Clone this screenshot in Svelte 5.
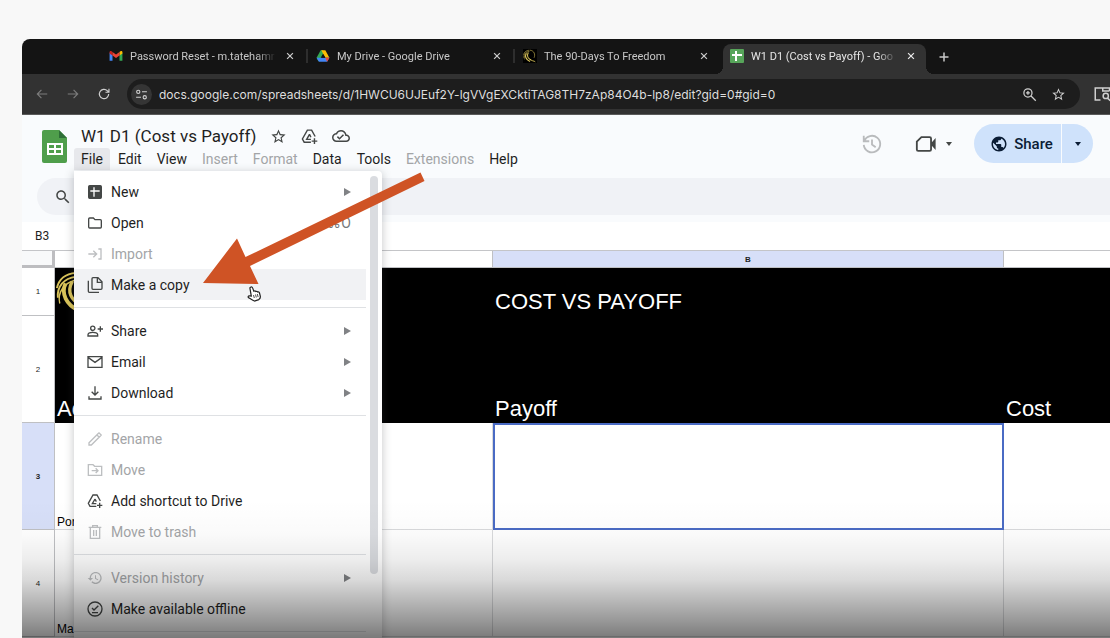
<script>
	// 24x24 icons; "line" icons are stroked, the others filled
	const icons = {
		back: { line: true, d: 'M21 12H4M11 5l-7 7 7 7' },
		forward: { line: true, d: 'M3 12h17M13 5l7 7-7 7' },
		reload: { line: true, d: 'M20 12a8 8 0 1 1-2.4-5.7L20 8.500M20.500 3v6h-6' },
		tune: { line: true, d: 'M3 7a3 3 0 1 0 6 0a3 3 0 1 0-6 0M13 7h9M2 17h9M15 17a3 3 0 1 0 6 0a3 3 0 1 0-6 0' },
		close: { line: true, d: 'M5 5l14 14M19 5L5 19' },
		plus: { line: true, d: 'M12 3v18M3 12h18' },
		zoom: { line: true, d: 'M3 9.500a6.500 6.500 0 1 0 13 0a6.500 6.500 0 1 0-13 0M14.500 14.500L22 22M9.500 6.500v6M6.500 9.500h6' },
		tabSearch: { line: true, d: 'M10 20H3V4h19v4M13 4v4h9M13.500 14.500a3.500 3.500 0 1 0 7 0a3.500 3.500 0 1 0-7 0M19.500 17.500L23 21' },
		star: { d: 'M22 9.240l-7.190-.620L12 2 9.190 8.630 2 9.240l5.460 4.730L5.820 21 12 17.270 18.180 21l-1.630-7.030L22 9.240zM12 15.400l-3.760 2.270 1-4.280-3.320-2.880 4.380-.380L12 6.100l1.710 4.040 4.380.380-3.320 2.880 1 4.280L12 15.400z' },
		cloud: { d: 'M19.350 10.040C18.670 6.590 15.640 4 12 4 9.110 4 6.600 5.640 5.350 8.040 2.340 8.360 0 10.910 0 14c0 3.310 2.690 6 6 6h13c2.760 0 5-2.240 5-5 0-2.640-2.050-4.780-4.650-4.960zM19 18H6c-2.210 0-4-1.790-4-4 0-2.050 1.530-3.760 3.560-3.970l1.070-.110.500-.950C8.080 7.140 9.940 6 12 6c2.620 0 4.880 1.860 5.390 4.430l.300 1.500 1.530.110c1.560.100 2.780 1.410 2.780 2.960 0 1.650-1.350 3-3 3zm-9-3.820l-2.090-2.090L6.500 13.500 10 17l6.010-6.010-1.410-1.410z' },
		search: { d: 'M15.500 14h-.790l-.280-.270C15.410 12.590 16 11.110 16 9.500 16 5.910 13.090 3 9.500 3S3 5.910 3 9.500 5.910 16 9.500 16c1.610 0 3.090-.590 4.230-1.570l.270.280v.790l5 4.990L20.490 19l-4.990-5zm-6 0C7.010 14 5 11.990 5 9.500S7.010 5 9.500 5 14 7.010 14 9.500 11.990 14 9.500 14z' },
		recent: { line: true, d: 'M3 3v6h6M3.500 9a9 9 0 1 1-.500 4M12 7v5.500l4 3' },
		video: { line: true, d: 'M7 4.500h9a1.500 1.500 0 0 1 1.500 1.500v12A1.500 1.500 0 0 1 16 19.500H3.500A1.500 1.500 0 0 1 2 18V9.500zM18 12l3.500-4v8zM19 12l2-2v4z' },
		globe: { d: 'M12 2C6.480 2 2 6.480 2 12s4.480 10 10 10 10-4.480 10-10S17.520 2 12 2zm-1 17.930c-3.950-.490-7-3.850-7-7.930 0-.620.080-1.210.210-1.790L9 15v1c0 1.100.900 2 2 2v1.930zm6.900-2.540c-.260-.810-1-1.390-1.900-1.390h-1v-3c0-.550-.450-1-1-1H8v-2h2c.550 0 1-.450 1-1V7h2c1.100 0 2-.900 2-2v-.410c2.930 1.190 5 4.060 5 7.410 0 2.080-.800 3.970-2.100 5.390z' },
		newSheet: { d: 'M4 1.500h16A2.500 2.500 0 0 1 22.500 4v16a2.500 2.500 0 0 1-2.500 2.500H4A2.500 2.500 0 0 1 1.500 20V4A2.500 2.500 0 0 1 4 1.500zM9.500 5v4.500H5v2h4.500V19h2v-7.500H19v-2h-7.500V5z' },
		folder: { line: true, d: 'M4 4.500h5.500l2.500 2.500h8a1.500 1.500 0 0 1 1.500 1.500V18a1.500 1.500 0 0 1-1.500 1.500H4A1.500 1.500 0 0 1 2.500 18V6A1.500 1.500 0 0 1 4 4.500z' },
		importFile: { line: true, d: 'M2 12h12M9.500 7l5 5-5 5M17 4.500h4v15h-4' },
		copy: { line: true, d: 'M9 1h7.500l6 6v10a1.500 1.500 0 0 1-1.500 1.500H9A1.500 1.500 0 0 1 7.500 17V2.500A1.500 1.500 0 0 1 9 1zM15.500 1.500V8H22M2 5.500V21.500a1.500 1.500 0 0 0 1.500 1.500H18' },
		person: { line: true, d: 'M5.500 8a3.200 3.200 0 1 0 6.400 0a3.200 3.200 0 1 0-6.400 0M1.500 19.500v-2c0-2 3.500-3.500 7.200-3.500s7.300 1.500 7.300 3.500v2zM20 5v8M16 9h8' },
		mail: { line: true, d: 'M1.500 4h21v16h-21zM2 5.500l10 7 10-7' },
		download: { line: true, d: 'M12 2v13M7 10l5 5 5-5M3 17v4h18v-4' },
		pencil: { line: true, d: 'M3 21v-3.500L16.500 4l1.500-1.300L21.300 6 20 7.500 6.500 21zM15 6l3 3' },
		move: { line: true, d: 'M2 4h7l2.500 2.500H22V20H2zM7 13h9M13 9.500l3.500 3.500-3.500 3.500' },
		shortcut: { line: true, d: 'M14 20H4.500l-2.500-4.500L9 3h6l5 9M12 9l-4 7h6M12 9l2 4M19 14.500v8M15 18.500h8' },
		trash: { line: true, d: 'M2.500 5h19M8.500 4.500V2.500h7v2M5 5.500v16h14v-16M10 9v9M14 9v9' },
		history: { d: 'M13 3c-4.970 0-9 4.030-9 9H1l3.890 3.890.070.140L9 12H6c0-3.870 3.130-7 7-7s7 3.130 7 7-3.130 7-7 7c-1.930 0-3.680-.790-4.940-2.060l-1.420 1.420C8.270 19.990 10.510 21 13 21c4.970 0 9-4.030 9-9s-4.030-9-9-9zm-1 5v5l4.280 2.540.720-1.210-3.500-2.080V8H12z' },
		offline: { line: true, d: 'M1.500 12a10.500 10.500 0 1 0 21 0a10.500 10.500 0 1 0-21 0M7.500 10.500l3 3L17 7M7.500 17.500h9' }
	};

	const tabs = [
		{ title: 'Password Reset - m.tatehamr', logo: 'gmail' },
		{ title: 'My Drive - Google Drive', logo: 'drive' },
		{ title: 'The 90-Days To Freedom', logo: 'swirl' },
		{ title: 'W1 D1 (Cost vs Payoff) - Goo', logo: 'sheets', active: true }
	];

	const menus = [
		{ label: 'File', open: true },
		{ label: 'Edit' },
		{ label: 'View' },
		{ label: 'Insert', disabled: true },
		{ label: 'Format', disabled: true },
		{ label: 'Data' },
		{ label: 'Tools' },
		{ label: 'Extensions', disabled: true },
		{ label: 'Help' }
	];

	const fileMenu = [
		[
			{ label: 'New', icon: 'newSheet', sub: true },
			{ label: 'Open', icon: 'folder', keys: '⌘O' },
			{ label: 'Import', icon: 'importFile', disabled: true },
			{ label: 'Make a copy', icon: 'copy', hover: true }
		],
		[
			{ label: 'Share', icon: 'person', sub: true },
			{ label: 'Email', icon: 'mail', sub: true },
			{ label: 'Download', icon: 'download', sub: true }
		],
		[
			{ label: 'Rename', icon: 'pencil', disabled: true },
			{ label: 'Move', icon: 'move', disabled: true },
			{ label: 'Add shortcut to Drive', icon: 'shortcut' },
			{ label: 'Move to trash', icon: 'trash', disabled: true }
		],
		[
			{ label: 'Version history', icon: 'history', disabled: true, sub: true },
			{ label: 'Make available offline', icon: 'offline' }
		]
	];

	let url = 'docs.google.com/spreadsheets/d/1HWCU6UJEuf2Y-lgVVgEXCktiTAG8TH7zAp84O4b-lp8/edit?gid=0#gid=0';
	let cellName = 'B3';
</script>

{#snippet icon(name, size)}
	<svg class="icon" class:line={icons[name].line} width={size} height={size} viewBox="0 0 24 24" aria-hidden="true">
		<path d={icons[name].d} fill-rule="evenodd" />
	</svg>
{/snippet}

{#snippet swirl()}
	<g fill="none" stroke="#d9c35a">
		<path d="M2 20C4 10 11 5 22 4" stroke-width="2" />
		<path d="M3 30C2 18 9 10 22 8" stroke-width="2" />
		<path d="M5 36C2 24 10 15 20 12" stroke-width="1.500" />
		<path d="M11 15C6 26 12 37 24 43" stroke-width="4" />
		<path d="M18 13C12 24 17 33 28 38" stroke-width="3.500" />
		<path d="M24 4C38 6 43 18 38 30" stroke-width="2" />
		<path d="M22 34C30 42 38 40 42 44" stroke-width="3" />
	</g>
{/snippet}

{#snippet logo(name)}
	{#if name === 'gmail'}
		<svg width="14" height="14" viewBox="0 0 24 24" aria-hidden="true">
			<path d="M1 20V6l5 4v10z" fill="#4285f4" />
			<path d="M23 20V6l-5 4v10z" fill="#34a853" />
			<path d="M1 6c0-3 3-3 5-1v6L1 7.500z" fill="#c5221f" />
			<path d="M23 6c0-3-3-3-5-1v6l5-3.500z" fill="#fbbc04" />
			<path d="M6 5l6 4.500L18 5v6l-6 4.500L6 11z" fill="#ea4335" />
		</svg>
	{:else if name === 'drive'}
		<svg width="14" height="14" viewBox="0 0 24 24" aria-hidden="true">
			<path d="M8 2h4l2 5-7 13-3 1-3-6z" fill="#34a853" />
			<path d="M9 2h7l7 13h-7z" fill="#fbbc04" />
			<path d="M7 15h16l-4 7H5l-4-7z" fill="#4285f4" />
			<path d="M16 15h7l-4 7z" fill="#ea4335" />
			<path d="M12 8l4 7H8z" fill="#141414" />
		</svg>
	{:else if name === 'swirl'}
		<svg width="14" height="14" viewBox="0 0 48 48" aria-hidden="true">
			<rect width="48" height="48" fill="#000" />
			{@render swirl()}
		</svg>
	{:else}
		<svg width="14" height="14" viewBox="0 0 14 14" aria-hidden="true">
			<rect width="14" height="14" rx="1" fill="#57a55a" />
			<path d="M6 2v10M2 6h10" stroke="#fff" stroke-width="2" />
		</svg>
	{/if}
{/snippet}

<div class="page">
	<div class="browser">
		<div class="tab-strip">
			{#each tabs as tab}
				<div class="tab" class:active={tab.active}>
					{@render logo(tab.logo)}
					<span class="tab-title">{tab.title}</span>
					<button aria-label="Close tab">{@render icon('close', 10)}</button>
				</div>
			{/each}
			<button class="new-tab" aria-label="New tab">{@render icon('plus', 12)}</button>
		</div>

		<div class="nav">
			<button class="nav-btn dim" aria-label="Back">{@render icon('back', 14)}</button>
			<button class="nav-btn dim" aria-label="Forward">{@render icon('forward', 14)}</button>
			<button class="nav-btn" aria-label="Reload">{@render icon('reload', 14)}</button>
			<div class="omnibox">
				<button class="site-info" aria-label="Site information">{@render icon('tune', 13)}</button>
				<input type="text" aria-label="Address" spellcheck="false" bind:value={url} />
				<button aria-label="Zoom">{@render icon('zoom', 15)}</button>
				<button aria-label="Bookmark">{@render icon('star', 15)}</button>
			</div>
			<button class="tab-search" aria-label="Search tabs">{@render icon('tabSearch', 18)}</button>
		</div>

		<header class="doc-header">
			<svg class="sheets-logo" width="25" height="33" viewBox="0 0 25 33" aria-hidden="true">
				<path d="M2 0h15l8 8v23a2 2 0 0 1-2 2H2a2 2 0 0 1-2-2V2a2 2 0 0 1 2-2z" fill="#4f9e4b" />
				<path d="M17 0l8 8h-8z" fill="#2e6f37" />
				<path d="M5 13h16v12H5zM7 15v3h5v-3zm7 0v3h5v-3zM7 20v3h5v-3zm7 0v3h5v-3z" fill="#fff" fill-rule="evenodd" />
			</svg>
			<div class="doc-main">
				<div class="title-row">
					<h1>W1 D1 (Cost vs Payoff)</h1>
					<button aria-label="Star">{@render icon('star', 17)}</button>
					<button aria-label="Add shortcut to Drive">{@render icon('shortcut', 17)}</button>
					<button aria-label="Document status">{@render icon('cloud', 18)}</button>
				</div>
				<nav class="menubar">
					{#each menus as menu}
						<button class:open={menu.open} disabled={menu.disabled}>{menu.label}</button>
					{/each}

					<div class="dropdown">
						<div class="dropdown-list" role="menu">
							{#each fileMenu as group}
								{#each group as item}
									<button class="item" class:hover={item.hover} role="menuitem" disabled={item.disabled}>
										{@render icon(item.icon, 16)}
										<span class="label">{item.label}</span>
										{#if item.keys}<span class="keys">{item.keys}</span>{/if}
										{#if item.sub}<span class="sub"></span>{/if}
									</button>
								{/each}
								<hr />
							{/each}
						</div>
						<div class="scrollbar"></div>
					</div>
				</nav>
			</div>
			<div class="doc-actions">
				<button class="recent" aria-label="Version history">{@render icon('recent', 22)}</button>
				<button class="meet" aria-label="Join a call">{@render icon('video', 22)}<span class="caret"></span></button>
				<div class="share">
					<button class="share-main">{@render icon('globe', 18)}Share</button>
					<button class="share-more" aria-label="Share options"><span class="caret"></span></button>
				</div>
			</div>
		</header>

		<div class="toolbar-row">
			<div class="toolbar">
				<button aria-label="Search the menus">{@render icon('search', 18)}</button>
			</div>
		</div>

		<div class="formula-bar">
			<input type="text" aria-label="Name box" bind:value={cellName} />
		</div>

		<table>
			<colgroup>
				<col class="c-head" />
				<col class="c-a" />
				<col class="c-b" />
				<col />
			</colgroup>
			<thead>
				<tr>
					<th class="corner"></th>
					<th></th>
					<th class="current">B</th>
					<th></th>
				</tr>
			</thead>
			<tbody>
				<tr class="banner short">
					<th>1</th>
					<td class="logo-cell">
						<svg width="46" height="46" viewBox="0 0 48 48" aria-hidden="true">{@render swirl()}</svg>
					</td>
					<td>COST VS PAYOFF</td>
					<td></td>
				</tr>
				<tr class="banner">
					<th>2</th>
					<td>Ac</td>
					<td>Payoff</td>
					<td>Cost</td>
				</tr>
				<tr>
					<th class="current">3</th>
					<td>Por</td>
					<td class="selected"></td>
					<td></td>
				</tr>
				<tr>
					<th>4</th>
					<td>Ma</td>
					<td></td>
					<td></td>
				</tr>
			</tbody>
		</table>
		<div class="fade"></div>
	</div>

	<svg class="pointer" width="14" height="16" viewBox="0 0 14 16" aria-hidden="true">
		<path
			d="M3.500 1.200c.9-.6 1.800-.2 2.100.7l1.200 3.300c.8-.5 1.600-.3 2 .3.800-.4 1.500-.1 1.800.5.900-.3 1.600.1 1.900 1l.8 3.200c.3 1.600-.4 2.600-1.500 3.400l-4.300 1.400c-1.800-.6-3.300-2-5.600-3.100-1.300-.7-.9-2.200.6-2.100l1.800.3L3 2.600c-.2-.6 0-1.100.5-1.400z"
			fill="#fff"
			stroke="#222"
			stroke-width="1.200"
		/>
		<path d="M6.500 9l.8 3M8.500 8.500l.8 3M10.300 8l.8 3" stroke="#222" stroke-width=".8" />
	</svg>

	<svg class="arrow" width="224" height="114" viewBox="0 0 224 114" aria-hidden="true">
		<path d="M1 112L35 67.500 43.500 86 218.500 1.500 222.500 10 48 95 56.500 113z" fill="#cf5325" />
	</svg>
</div>

<style>
	:global(body) {
		margin: 0;
		background: #f8f8f8;
	}

	.page {
		position: relative;
		box-sizing: border-box;
		height: 100vh;
		padding: 39px 0 0 22px;
		overflow: hidden;
		font-family: Roboto, 'Liberation Sans', sans-serif;
		color: #1f1f1f;
	}

	.browser {
		position: relative;
		height: 100%;
		border-top-left-radius: 8px;
		overflow: hidden;
		background: #fff;
	}

	button {
		display: flex;
		align-items: center;
		justify-content: center;
		padding: 0;
		border: none;
		background: none;
		color: inherit;
		font: inherit;
	}

	.icon {
		flex: none;
		fill: currentColor;
	}

	.icon.line {
		fill: none;
		stroke: currentColor;
		stroke-width: 2;
	}

	/* Browser chrome */
	.tab-strip {
		display: flex;
		gap: 4px;
		height: 35px;
		padding-left: 80px;
		background: #141414;
		color: #c8c8c8;
		font: 11px Roboto, sans-serif;
	}

	.tab {
		position: relative;
		display: flex;
		align-items: center;
		box-sizing: border-box;
		width: 203px;
		padding: 0 9px 1px 7px;
	}

	.tab svg {
		flex: none;
	}

	.tab:nth-child(-n + 2)::after {
		content: '';
		position: absolute;
		right: -3px;
		width: 2px;
		height: 14px;
		background: #2e2e2e;
	}

	.tab.active {
		height: 30px;
		margin-top: 5px;
		padding-bottom: 6px;
		border-radius: 8px 8px 0 0;
		background: #323232;
		color: #e6e6e6;
	}

	.tab.active::before,
	.tab.active::after {
		content: '';
		position: absolute;
		bottom: 0;
		width: 8px;
		height: 8px;
	}

	.tab.active::before {
		left: -8px;
		background: radial-gradient(circle at 0 0, #141414 8px, #323232 8px);
	}

	.tab.active::after {
		right: -8px;
		background: radial-gradient(circle at 100% 0, #141414 8px, #323232 8px);
	}

	.tab-title {
		flex: 1;
		margin: 0 8px 0 7px;
		overflow: hidden;
		white-space: nowrap;
		mask-image: linear-gradient(to left, transparent, #000 20px);
	}

	.tab button {
		width: 12px;
	}

	.tab button .icon,
	.new-tab .icon {
		stroke-width: 3;
	}

	.new-tab {
		width: 27px;
	}

	.nav {
		display: flex;
		align-items: center;
		box-sizing: border-box;
		height: 41px;
		padding-left: 4px;
		border-bottom: 1px solid #5a5a5a;
		background: #323232;
		color: #d0d0d0;
	}

	.nav-btn {
		width: 31px;
	}

	.dim {
		color: #7c7c7c;
	}

	.omnibox {
		flex: 1;
		display: flex;
		align-items: center;
		gap: 14px;
		height: 30px;
		margin: 0 13px 0 8px;
		padding: 0 14px 0 4px;
		border-radius: 15px;
		background: #1d1d1d;
	}

	.omnibox input {
		flex: 1;
		min-width: 0;
		margin-left: -7px;
		padding: 0;
		border: none;
		outline: none;
		background: none;
		color: #dedede;
		font: 12px Inter, sans-serif;
	}

	.site-info {
		width: 21px;
		height: 21px;
		border-radius: 50%;
		background: #353535;
	}

	.tab-search {
		justify-content: flex-start;
		width: 17px;
	}

	/* Document header */
	.doc-header {
		display: flex;
		box-sizing: border-box;
		height: 63px;
		padding: 9px 17px 0 20px;
		background: #f9fbfd;
	}

	.sheets-logo {
		flex: none;
		margin: 6px 7px 0 0;
	}

	.doc-main {
		flex: 1;
	}

	.title-row {
		display: flex;
		align-items: center;
		gap: 14px;
		height: 24px;
		padding-left: 7px;
		color: #444746;
	}

	h1 {
		margin: 0;
		color: #1f1f1f;
		font-size: 17px;
		font-weight: 400;
		line-height: 24px;
		white-space: nowrap;
	}

	.menubar {
		position: relative;
		display: flex;
		gap: 1px;
		font-size: 14px;
	}

	.menubar > button {
		height: 22px;
		padding: 0 7px;
		border-radius: 3px 3px 0 0;
	}

	.menubar > button.open {
		background: #e7e8ec;
	}

	.menubar > button:disabled {
		color: #a3a5a7;
	}

	.dropdown {
		position: absolute;
		top: 23px;
		left: 0;
		z-index: 5;
		display: flex;
		align-items: flex-start;
		box-sizing: border-box;
		width: 308px;
		height: 500px;
		padding-top: 5px;
		border-radius: 0 4px 4px 4px;
		background: #fff;
		box-shadow: 0 2px 8px 1px rgba(60, 64, 67, 0.25);
	}

	.dropdown-list {
		flex: 1;
	}

	.item {
		justify-content: flex-start;
		width: 100%;
		height: 31px;
		padding: 0 15px 0 13px;
		text-align: left;
	}

	.item .icon {
		margin-right: 8px;
		color: #444746;
	}

	.item.hover {
		background: #f1f2f4;
	}

	.item:disabled {
		color: #a3a5a7;
	}

	.item:disabled .icon {
		color: #bdbfc1;
	}

	.label {
		flex: 1;
	}

	.keys {
		color: #77797c;
	}

	.sub {
		border-style: solid;
		border-width: 4px 0 4px 7px;
		border-color: transparent transparent transparent #808285;
	}

	hr {
		height: 1px;
		margin: 7px 0;
		border: none;
		background: #dfe1e4;
	}

	.scrollbar {
		width: 8px;
		height: 398px;
		margin: 0 4px;
		border-radius: 4px;
		background: #dadce0;
	}

	.doc-actions {
		display: flex;
		align-items: center;
		height: 39px;
	}

	.recent {
		margin-right: 32px;
		color: #b9bbbd;
	}

	.meet {
		gap: 9px;
		margin-right: 22px;
		color: #444746;
	}

	.caret {
		border-style: solid;
		border-width: 4px 3px 0;
		border-color: currentColor transparent transparent;
	}

	.share {
		display: flex;
		gap: 1px;
		height: 39px;
		color: #0b1d35;
		font-size: 15px;
		font-weight: 500;
	}

	.share button {
		background: #cfe2fb;
	}

	.share-main {
		gap: 6px;
		width: 87px;
		padding-left: 8px;
		box-sizing: border-box;
		border-radius: 20px 0 0 20px;
	}

	.share-more {
		width: 31px;
		border-radius: 0 20px 20px 0;
	}

	.toolbar-row {
		padding: 0 0 7px 15px;
		background: #f9fbfd;
	}

	.toolbar {
		display: flex;
		height: 37px;
		padding-left: 17px;
		border-radius: 19px 0 0 19px;
		background: #f0f2f6;
		color: #444746;
	}

	.formula-bar {
		display: flex;
		height: 28px;
		border-bottom: 1px solid #c4c5c8;
	}

	.formula-bar input {
		width: 60px;
		padding: 0 0 0 13px;
		border: none;
		outline: none;
		background: none;
		color: #1f1f1f;
		font: 12px Roboto, sans-serif;
	}

	/* Sheet */
	table {
		width: 100%;
		table-layout: fixed;
		border-collapse: separate;
		border-spacing: 0;
		font: 12px 'Liberation Sans', sans-serif;
	}

	.c-head {
		width: 33px;
	}

	.c-a {
		width: 438px;
	}

	.c-b {
		width: 511px;
	}

	th,
	td {
		box-sizing: border-box;
		border-right: 1px solid #d9dadc;
		border-bottom: 1px solid #d9dadc;
	}

	th:last-child,
	td:last-child {
		border-right: none;
	}

	th {
		padding: 0;
		border-color: #bfc0c3;
		font-size: 8px;
		font-weight: 400;
	}

	thead th {
		height: 17px;
	}

	th.current {
		background: #d7dff8;
		font-weight: 700;
	}

	.corner {
		border-right: 3px solid #bdbdc0;
		border-bottom: 3px solid #bdbdc0;
		background: #f8f9fa;
	}

	td {
		height: 107px;
		padding: 0 2px;
		vertical-align: bottom;
		color: #000;
	}

	.banner td {
		border-color: #000;
		background: #000;
		color: #fff;
		font-size: 22px;
		line-height: 26px;
	}

	.short td {
		height: 48px;
	}

	.logo-cell svg {
		display: block;
	}

	.short td.logo-cell {
		padding: 0;
	}

	.selected {
		outline: 2px solid #4a6bc4;
		outline-offset: -2px;
	}

	.fade {
		position: absolute;
		inset: auto 0 0;
		z-index: 10;
		height: 138px;
		background: linear-gradient(
			transparent,
			rgba(0, 0, 0, 0.02) 25%,
			rgba(0, 0, 0, 0.07) 43%,
			rgba(0, 0, 0, 0.15) 58%,
			rgba(0, 0, 0, 0.27) 72%,
			rgba(0, 0, 0, 0.4) 87%,
			rgba(0, 0, 0, 0.52)
		);
		pointer-events: none;
	}

	.pointer {
		position: absolute;
		top: 286px;
		left: 247px;
		z-index: 11;
	}

	.arrow {
		position: absolute;
		top: 171px;
		left: 202px;
		z-index: 12;
	}
</style>
